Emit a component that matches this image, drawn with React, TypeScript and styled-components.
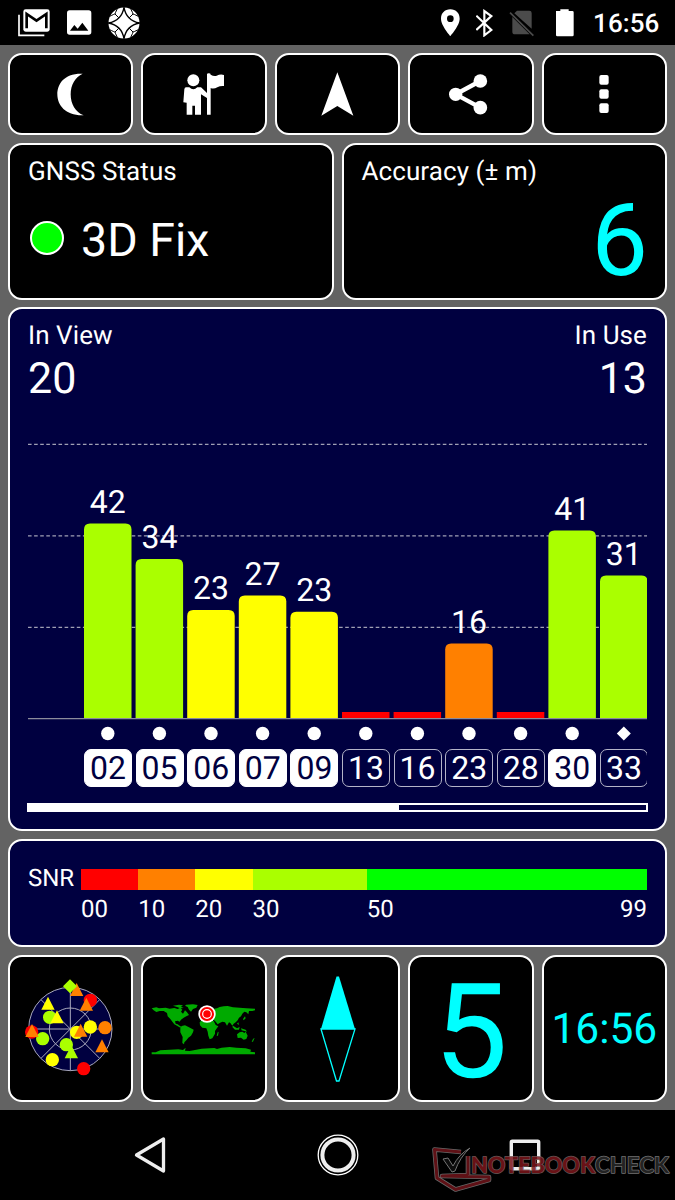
import React from 'react';
import styled, { createGlobalStyle } from 'styled-components';

const NAVY = '#000040';
const CYAN = '#00ffff';
const LIME = '#aaff00';
const ORANGE = '#ff8000';

const GlobalStyle = createGlobalStyle`
  * { box-sizing: border-box; }
  body {
    margin: 0;
    background: #000;
    font-family: Roboto, "Liberation Sans", sans-serif;
    color: #fff;
    text-rendering: geometricPrecision;
  }
  svg { display: block; flex: none; }
`;

const Screen = styled.div`
  width: 675px;
  height: 1200px;
  display: flex;
  flex-direction: column;
  overflow: hidden;
  background: #000;
`;

const StatusBar = styled.header`
  height: 45px;
  flex: none;
  display: flex;
  align-items: center;
  justify-content: space-between;
  padding: 0 15px 0 18px;
`;

const IconGroup = styled.div<{ $gap: number }>`
  display: flex;
  align-items: center;
  gap: ${(p) => p.$gap}px;
`;

const StatusTime = styled.span`
  font-size: 26px;
  font-weight: 500;
  line-height: 30px;
  width: 67px;
  letter-spacing: 0.1px;
  margin-left: -2px;
  padding-top: 2px;
`;

const Body = styled.main`
  flex: 1;
  display: flex;
  flex-direction: column;
  gap: 7.5px;
  padding: 7.5px 8px;
  background: #636363;
`;

const Row = styled.div<{ $height: number }>`
  display: flex;
  gap: 8px;
  height: ${(p) => p.$height}px;
  flex: none;
`;

const Card = styled.section<{ $navy?: boolean }>`
  flex: 1 1 0;
  min-width: 0;
  display: flex;
  flex-direction: column;
  border: 2px solid #fff;
  border-radius: 14px;
  padding: 11px 18px 0;
  background: ${(p) => (p.$navy ? NAVY : '#000')};
`;

const Tile = styled.button`
  flex: 1 1 0;
  min-width: 0;
  display: flex;
  align-items: center;
  justify-content: center;
  border: 2px solid #fff;
  border-radius: 14px;
  padding: 0;
  background: #000;
  color: ${CYAN};
  font-family: inherit;
  text-rendering: inherit;
`;

const Nudge = styled.span<{ $right?: number; $top?: number }>`
  padding: ${(p) => p.$top ?? 0}px ${(p) => p.$right ?? 0}px 0 0;
`;

const Title = styled.div`
  padding-top: 1px;
  font-size: 26px;
  line-height: 30px;
  letter-spacing: 0.08px;
`;

const FixRow = styled.div`
  display: flex;
  align-items: center;
  gap: 17px;
  margin-top: 27px;
  padding-left: 2px;
  font-size: 46.5px;
  line-height: 54px;
`;

const FixLamp = styled.span`
  width: 34px;
  height: 34px;
  margin-top: -5px;
  border: 2px solid #fff;
  border-radius: 50%;
  background: #00ff00;
`;

const AccuracyValue = styled.div`
  margin: 4px -1px 0 0;
  font-size: 101px;
  line-height: 100px;
  text-align: right;
  color: ${CYAN};
`;

const Counts = styled.div`
  display: flex;
  justify-content: space-between;
`;

const Count = styled.div<{ $right?: boolean }>`
  text-align: ${(p) => (p.$right ? 'right' : 'left')};
`;

const CountValue = styled.div`
  margin-top: 3px;
  font-size: 43px;
  line-height: 50px;
`;

const Chips = styled.div`
  display: flex;
  gap: 3.6px;
  padding-left: 56px;
  overflow: hidden;
`;

const Chip = styled.span<{ $used: boolean }>`
  flex: none;
  width: 48px;
  height: 38px;
  border: 1px solid ${(p) => (p.$used ? '#fff' : '#b4b4c8')};
  border-radius: 7px;
  background: ${(p) => (p.$used ? '#fff' : 'transparent')};
  color: ${(p) => (p.$used ? NAVY : '#fff')};
  font-size: 32px;
  line-height: 37px;
  text-align: center;
`;

const ScrollTrack = styled.div`
  margin: 16px -1px 0;
  height: 9px;
  border: 2px solid #fff;
`;

const ScrollThumb = styled.div`
  width: 370px;
  height: 100%;
  background: #fff;
`;

const SnrRow = styled.div`
  display: flex;
  padding-top: 17px;
  font-size: 24px;
  line-height: 28px;
`;

const SnrLabel = styled.span`
  width: 53px;
  flex: none;
  margin-top: -5px;
  font-size: 24px;
  line-height: 28px;
`;

const Scale = styled.div`
  flex: 1;
  display: flex;
`;

const Segment = styled.div<{ $span: number; $color: string }>`
  flex: ${(p) => p.$span} 1 0;
  min-width: 0;
  display: flex;
  justify-content: space-between;
  border-top: 21px solid ${(p) => p.$color};
  padding-top: 5px;
`;

const BigDigit = styled.span`
  font-size: 132px;
  line-height: 132px;
  padding-top: 9px;
`;

const Clock = styled.span`
  font-size: 42.5px;
  line-height: 50px;
  padding: 4px 0 0 0;
`;

const NavBar = styled.nav`
  height: 90px;
  flex: none;
  display: flex;
  position: relative;
  padding: 0 56px;
`;

const NavItem = styled.div`
  flex: 1;
  display: flex;
  align-items: center;
  justify-content: center;
`;

const Watermark = styled.svg`
  position: absolute;
  right: 0;
  bottom: 0;
`;

type Sat = { id: string; snr: number | null; top: number; used: boolean; color: string; diamond?: boolean };

const sats: Sat[] = [
  { id: '02', snr: 42, top: 523.5, used: true, color: LIME },
  { id: '05', snr: 34, top: 559, used: true, color: LIME },
  { id: '06', snr: 23, top: 610, used: true, color: '#ffff00' },
  { id: '07', snr: 27, top: 595.5, used: true, color: '#ffff00' },
  { id: '09', snr: 23, top: 611.8, used: true, color: '#ffff00' },
  { id: '13', snr: null, top: 712, used: false, color: '#ff0000' },
  { id: '16', snr: null, top: 712, used: false, color: '#ff0000' },
  { id: '23', snr: 16, top: 643.5, used: false, color: ORANGE },
  { id: '28', snr: null, top: 712, used: false, color: '#ff0000' },
  { id: '30', snr: 41, top: 530.5, used: true, color: LIME },
  { id: '33', snr: 31, top: 575.5, used: false, color: LIME, diamond: true },
];

const BASE = 718.5;

function SignalChart() {
  return (
    <svg width="619" height="345" viewBox="28 404 619 345">
      {[444.3, 535.8, 627.3].map((y) => (
        <line key={y} x1="28" x2="647" y1={y} y2={y} stroke="#a0a0b4" strokeWidth="1.3" strokeDasharray="3.6 2.5" />
      ))}
      {sats.map((s, i) => {
        const x = 84 + i * 51.6;
        const c = x + 23.8;
        const w = 47.5;
        return (
          <g key={s.id}>
            {s.snr === null ? (
              <rect x={x} y={s.top} width={w} height={BASE - s.top} fill={s.color} />
            ) : (
              <path
                d={`M${x} ${BASE}V${s.top + 6}q0-6 6-6h${w - 12}q6 0 6 6V${BASE}z`}
                fill={s.color}
              />
            )}
            {s.snr !== null && (
              <text x={c} y={s.top - 10.8} fontSize="32" textAnchor="middle" fill="#fff">
                {s.snr}
              </text>
            )}
            {s.diamond ? (
              <path d={`M${c} 726.5l7 7l-7 7l-7-7z`} fill="#fff" />
            ) : (
              <circle cx={c} cy="733.5" r="6.7" fill="#fff" />
            )}
          </g>
        );
      })}
      <line x1="28" x2="647" y1="718.7" y2="718.7" stroke="#8c8c9c" strokeWidth="1.2" />
    </svg>
  );
}

function MailIcon() {
  return (
    <svg width="32" height="28" viewBox="54 26 96 84">
      <path d="M57 43V105H133" fill="none" stroke="#fff" strokeWidth="5" />
      <rect x="70" y="27" width="79" height="67" rx="7" fill="#fff" />
      <path d="M80 84V41L109.500 61L139 41V84" fill="none" stroke="#000" strokeWidth="8" />
    </svg>
  );
}

function PhotoIcon() {
  return (
    <svg width="25" height="25" viewBox="200 29 75 75">
      <path
        fillRule="evenodd"
        fill="#fff"
        d="M208 30H265Q273 30 273 38V95Q273 103 265 103H208Q200 103 200 95V38Q200 30 208 30zM209 91H264L246 67L232 85L222 74z"
      />
    </svg>
  );
}

function StarWheelIcon() {
  return (
    <svg width="32" height="32" viewBox="-48 -48 96 96">
      <circle r="46.500" fill="#fff" />
      <g fill="none" stroke="#000" strokeWidth="3.500">
        {[0, 90, 180, 270].map((a) => (
          <g key={a} transform={`rotate(${a})`}>
            <path d="M0-47Q-7-7-47 0" strokeWidth="4" />
            <path d="M-16-16L-27-27M-43-20Q-29-27-27-27Q-27-29-20-43" strokeWidth="3" />
          </g>
        ))}
      </g>
    </svg>
  );
}

function RadarTile() {
  const dots: [number, number, string][] = [
    [272, 151, '#f00'], [150, 202, LIME], [96, 246, '#f00'], [129, 266, LIME], [272, 231, '#ff0'],
    [316, 233, ORANGE], [231, 247, '#ff0'], [200, 284, LIME], [158, 329, '#ff0'], [252, 356, '#f00'],
  ];
  const triangles: [number, number, string][] = [
    [145, 160, '#ff0'], [172, 201, '#ff0'], [231, 119, ORANGE], [260, 163, ORANGE],
    [97, 242, ORANGE], [243, 241, ORANGE], [307, 288, ORANGE], [215, 306, LIME],
  ];
  return (
    <svg width="90" height="102" viewBox="76 84 270 306">
      <circle cx="212" cy="237" r="125" fill={NAVY} />
      <g fill="none" stroke="#a9a9bd" strokeWidth="3">
        <circle cx="212" cy="237" r="125" />
        <circle cx="212" cy="237" r="63" />
        <path d="M212 112V362M87 237H337M124 149L300 325M300 149L124 325" />
      </g>
      {dots.map(([x, y, c]) => (
        <circle key={`${x}-${y}`} cx={x} cy={y} r="20" fill={c} />
      ))}
      {triangles.map(([x, y, c]) => (
        <path key={`${x}-${y}`} d={`M${x} ${y - 20}l20 39h-40z`} fill={c} />
      ))}
      <path d="M211 88l21 21l-21 21l-21-21z" fill={LIME} />
    </svg>
  );
}

function WorldTile() {
  return (
    <svg width="106" height="54" viewBox="34 40 318 162">
      <g fill="#00aa00">
        <path d="M36 56L50 53L58 56L78 54L90 57L104 55L114 58L122 54L128 60L124 66L130 72L136 62L142 68L148 76L140 80L132 84L124 90L120 96L114 93L106 95L108 102L114 104L120 108L126 112L122 114L112 108L104 104L98 96L92 88L84 80L82 70L72 64L60 64L50 67L42 62z" />
        <path d="M100 48L118 45L130 47L124 51L132 55L122 56L112 52z" />
        <path d="M140 45L160 44L174 46L170 54L160 58L154 66L148 60L144 52L136 48z" />
        <path d="M126 109L136 107L148 113L162 120L160 128L154 138L146 144L140 152L134 158L133 164L128 160L129 142L122 128L122 116z" />
        <path d="M180 92L184 84L182 78L190 74L196 66L192 60L202 54L212 58L220 58L232 56L240 52L252 50L264 49L280 53L300 54L320 56L346 57L346 62L338 64L328 64L326 74L320 68L314 66L308 72L304 80L298 84L294 92L288 98L282 102L278 108L272 100L268 98L262 108L256 98L248 96L240 100L234 104L228 96L222 90L214 88L206 84L196 86L188 90z" />
        <path d="M180 98L186 92L200 90L212 94L222 94L228 106L236 110L230 118L226 124L226 132L218 146L210 149L206 138L204 126L200 116L188 114L181 107z" />
        <path d="M234 128L237 126L235 138L231 138zM280 108L292 116L300 112L298 120L286 120L278 112zM304 116L318 120L322 126L306 122zM292 134L300 128L308 126L314 130L318 126L324 138L320 148L312 150L304 144L294 145zM340 148L345 144L340 156L336 156zM310 88L316 80L318 86L312 92zM182 66L188 64L190 74L184 74zM292 102L296 98L298 106z" />
        <path d="M36 188L48 188L62 182L90 180L116 179L130 181L138 174L136 183L150 184L170 180L186 177L210 176L224 175L232 178L246 174L270 172L290 174L318 176L334 180L332 186L346 188V194H36z" />
      </g>
      <circle cx="202" cy="73" r="26" fill="#fff" />
      <circle cx="202" cy="73" r="21" fill="#f00" />
      <circle cx="202" cy="73" r="13" fill="#f00" stroke="#fff" strokeWidth="3.500" />
    </svg>
  );
}

const LAPTOP = 'M468 1175V1156M461 1152L434.500 1149.500L437 1178L455.500 1189.500L489 1180V1177L442 1176L468 1175';

export default function App() {
  return (
    <Screen>
      <GlobalStyle />
      <StatusBar>
        <IconGroup $gap={16.5}>
          <MailIcon />
          <PhotoIcon />
          <StarWheelIcon />
        </IconGroup>
        <IconGroup $gap={15}>
          <svg width="20" height="28" viewBox="318 27 60 84">
            <path fillRule="evenodd" fill="#fff" d="M346 28C329 28 318 40 318 56C318 77 346 108 346 108S374 77 374 56C374 40 363 28 346 28zM346 46a10 10 0 1 1 0 20a10 10 0 1 1 0-20z" />
          </svg>
          <svg width="18" height="28" viewBox="422 26 54 84">
            <path d="M423 46L468 89L447 105V32L468 47L423 89" fill="none" stroke="#fff" strokeWidth="6.500" />
          </svg>
          <svg width="26" height="28" viewBox="521 26 78 84">
            <path d="M545 31H582Q589 31 589 38V85L537 39zM531 50L583 102H539Q531 102 531 94z" fill="#4b4b4b" />
            <path d="M524 37L594 106" stroke="#4b4b4b" strokeWidth="5" />
          </svg>
          <svg width="30" height="28" viewBox="646 26 90 84">
            <path d="M664 32H677V27H702V32H713Q717 32 717 36V104Q717 108 713 108H668Q664 108 664 104z" fill="#fff" />
          </svg>
          <StatusTime>16:56</StatusTime>
        </IconGroup>
      </StatusBar>

      <Body>
        <Row $height={82.5}>
          <Tile aria-label="Night mode">
            <Nudge $top={1}>
              <svg width="27" height="43" viewBox="169 217 81 129">
                <path d="M246 219C190 217 170 250 170 281C170 315 196 346 249 344C224 335 210 310 210 281C210 252 224 229 246 219z" fill="#fff" />
              </svg>
            </Nudge>
          </Tile>
          <Tile aria-label="Guide">
            <Nudge $top={1}>
              <svg width="42" height="43" viewBox="549 217 126 129">
                <g fill="#fff">
                  <circle cx="580" cy="239" r="18" />
                  <path d="M558 260L568 260Q580 272 592 260L603 260L621 277V221Q621 218 626 218Q632 218 632 222Q642 228 650 225Q662 219 672 223V256Q660 255 652 260Q641 266 632 262V342H621V292L603 281L603 342H585V315H577V342H560V306L550 305L553 266Q554 260 558 260z" />
                </g>
              </svg>
            </Nudge>
          </Tile>
          <Tile aria-label="Navigate">
            <svg width="33" height="44" viewBox="0 0 99 132">
              <path d="M49 1L97 131L49 102L1 131z" fill="#fff" />
            </svg>
          </Tile>
          <Tile aria-label="Share">
            <Nudge $right={5} $top={1}>
              <svg width="39" height="41" viewBox="341 221 117 123">
                <path d="M435 242L361 282L435 322" fill="none" stroke="#fff" strokeWidth="13" />
                <g fill="#fff">
                  <circle cx="361" cy="282" r="20" />
                  <circle cx="435" cy="242" r="20.500" />
                  <circle cx="435" cy="322" r="20.500" />
                </g>
              </svg>
            </Nudge>
          </Tile>
          <Tile aria-label="More">
            <svg width="10" height="38" viewBox="0 0 30 114">
              <g fill="#fff">
                <rect x="1" y="0" width="28" height="29" rx="6" />
                <rect x="1" y="42.500" width="28" height="29" rx="6" />
                <rect x="1" y="85" width="28" height="29" rx="6" />
              </g>
            </svg>
          </Tile>
        </Row>

        <Row $height={157}>
          <Card>
            <Title>GNSS Status</Title>
            <FixRow>
              <FixLamp />
              3D Fix
            </FixRow>
          </Card>
          <Card>
            <Title>Accuracy (± m)</Title>
            <AccuracyValue>6</AccuracyValue>
          </Card>
        </Row>

        <Row $height={524}>
          <Card $navy>
            <Counts>
              <Count>
                <Title>In View</Title>
                <CountValue>20</CountValue>
              </Count>
              <Count $right>
                <Title>In Use</Title>
                <CountValue>13</CountValue>
              </Count>
            </Counts>
            <SignalChart />
            <Chips>
              {sats.map((s) => (
                <Chip key={s.id} $used={s.used}>
                  {s.id}
                </Chip>
              ))}
            </Chips>
            <ScrollTrack>
              <ScrollThumb />
            </ScrollTrack>
          </Card>
        </Row>

        <Row $height={108.5}>
          <Card $navy>
            <SnrRow>
              <SnrLabel>SNR</SnrLabel>
              <Scale>
                <Segment $span={10} $color="#ff0000"><span>00</span></Segment>
                <Segment $span={10} $color={ORANGE}><span>10</span></Segment>
                <Segment $span={10} $color="#ffff00"><span>20</span></Segment>
                <Segment $span={20} $color={LIME}><span>30</span></Segment>
                <Segment $span={49} $color="#00ff00"><span>50</span><span>99</span></Segment>
              </Scale>
            </SnrRow>
          </Card>
        </Row>

        <Row $height={147.5}>
          <Tile aria-label="Sky view">
            <Nudge $top={2} $right={1}>
              <RadarTile />
            </Nudge>
          </Tile>
          <Tile aria-label="Map">
            <Nudge $top={4}>
              <WorldTile />
            </Nudge>
          </Tile>
          <Tile aria-label="Compass">
            <Nudge $top={1}>
              <svg width="36" height="106" viewBox="0 0 36 106">
                <path d="M16.500.5h2.500L35 53H1z" fill={CYAN} />
                <path d="M1 53L16.500 105h2.500L35 53z" fill="none" stroke={CYAN} strokeWidth="1.300" />
              </svg>
            </Nudge>
          </Tile>
          <Tile aria-label="Speed">
            <BigDigit>5</BigDigit>
          </Tile>
          <Tile aria-label="Time">
            <Clock>16:56</Clock>
          </Tile>
        </Row>
      </Body>

      <NavBar>
        <NavItem>
          <svg width="34" height="40" viewBox="0 0 34 40">
            <path d="M30.500 4V36L3.500 20z" fill="none" stroke="#eee" strokeWidth="3.300" strokeLinejoin="round" />
          </svg>
        </NavItem>
        <NavItem>
          <svg width="42" height="42" viewBox="-21 -21 42 42">
            <circle r="19.800" fill="none" stroke="#fff" strokeWidth="1.300" />
            <circle r="15.600" fill="none" stroke="#eee" strokeWidth="4" />
          </svg>
        </NavItem>
        <NavItem>
          <svg width="32" height="32" viewBox="-16 -16 32 32">
            <rect x="-13.700" y="-13.700" width="27.400" height="27.400" rx="1" fill="none" stroke="#eee" strokeWidth="3.400" />
          </svg>
        </NavItem>
        <Watermark width="245" height="60" viewBox="430 1140 245 60">
          <g opacity="0.85">
            <path d={LAPTOP} fill="none" stroke="#7a7a7a" strokeWidth="4.600" strokeLinejoin="round" />
            <path d={LAPTOP} fill="none" stroke="#70141a" strokeWidth="3" strokeLinejoin="round" />
            <path d="M443 1159L448 1158L453 1166Q459 1154 470 1148Q460 1157 455 1171L452 1172z" fill="#111" stroke="#8a8a8a" strokeWidth="1" />
            <g fontFamily="Lato, sans-serif" fontSize="22.500" strokeWidth="1.500" paintOrder="stroke" strokeLinejoin="round">
              <text x="471" y="1172.500" fontWeight="900" fill="#7c161b" stroke="#756565" textLength="124" lengthAdjust="spacingAndGlyphs">NOTEBOOK</text>
              <text x="595" y="1172.500" fontWeight="700" fill="#2a2a2a" stroke="#858585" textLength="74" lengthAdjust="spacingAndGlyphs">CHECK</text>
            </g>
          </g>
        </Watermark>
      </NavBar>
    </Screen>
  );
}
